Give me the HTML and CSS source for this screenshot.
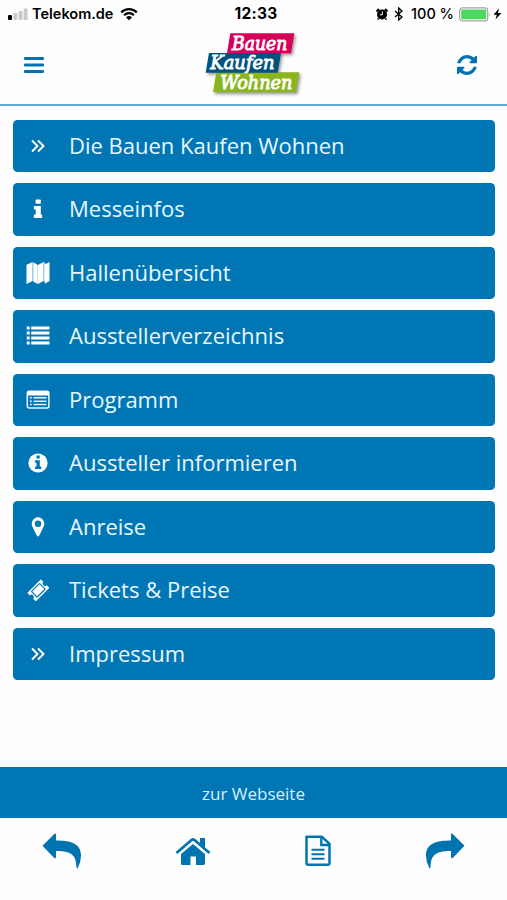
FILE: index.html
```html
<!DOCTYPE html>
<html lang="de">
<head>
<meta charset="utf-8">
<title>Bauen Kaufen Wohnen</title>
<link rel="stylesheet" href="styles.css">
</head>
<body>
<div class="status">
  <div class="status-left">
    <svg width="20" height="14" viewBox="0 0 20 14"><rect x="0" y="8" width="4" height="5" rx="1"/><g fill="#c9c9c9"><rect x="5.3" y="6" width="4" height="7" rx="1"/><rect x="10.5" y="4" width="4" height="9" rx="1"/><rect x="15.6" y="1.500" width="4" height="11.500" rx="1"/></g></svg>
    <span class="carrier">Telekom.de</span>
    <svg width="18" height="14" viewBox="0 0 18 14"><g fill="none" stroke="#000" stroke-width="2.200"><path d="M1.200 5.400a11 11 0 0 1 15.600 0M4.100 8.200a7 7 0 0 1 9.800 0"/></g><path d="M6 10.400a4.300 4.300 0 0 1 6 0L9 13.300z"/></svg>
  </div>
  <span class="time">12:33</span>
  <div class="status-right">
    <svg width="14" height="14" viewBox="0 0 14 14"><circle cx="7" cy="7.500" r="5"/><path d="M1.500 4.500 4 2M12.500 4.500 10 2M3.500 11.500l-.7 1M10.500 11.500l.7 1" stroke="#000" stroke-width="2"/><path d="M7.300 4.500v3.300H4.800" fill="none" stroke="#fff" stroke-width="1"/></svg>
    <svg class="bluetooth" width="10" height="14" viewBox="0 0 10 14"><path d="M1 4l7 6-3.300 3V1L8 4 1 10" fill="none" stroke="#000" stroke-width="1.300"/></svg>
    <span class="percent">100 %</span>
    <svg width="32" height="15" viewBox="0 0 32 15"><rect x=".7" y=".9" width="28" height="13" rx="3" fill="#fff" stroke="#a5a5a5" stroke-width="1.200"/><rect x="2.200" y="2.500" width="25" height="9.800" rx="1.200" fill="#4cd95f"/><path d="M30 5.500q1.500 2 0 4z" fill="#a5a5a5"/></svg>
    <svg class="bolt" width="9" height="12" viewBox="0 0 9 12"><path d="M6 .5.5 6.700h3.300L2.500 11.500 8.500 5H5z"/></svg>
  </div>
</div>
<header class="header">
  <svg width="20" height="18" viewBox="0 0 20 18"><path d="M1.200 2.500h17.600M1.200 9h17.600M1.200 15.500h17.600" stroke="#0074b1" stroke-width="3" stroke-linecap="round"/></svg>
  <svg class="logo" width="106" height="74" viewBox="30 84 318 222">
    <g class="logo-shadow"><path fill="#d6005a" d="M121 100H313L303 160H111z"/><path fill="#8ab51d" d="M79 217H328L318 277H69z"/><path fill="#00527f" d="M57 159H273L263 218H47z"/></g>
    <g class="logo-text"><text x="126" y="151" textLength="166" lengthAdjust="spacingAndGlyphs">Bauen</text><text x="61" y="208" textLength="193" lengthAdjust="spacingAndGlyphs">Kaufen</text><text x="91" y="267" textLength="216" lengthAdjust="spacingAndGlyphs">Wohnen</text></g>
  </svg>
  <svg width="20" height="20" viewBox="0 0 1536 1536" fill="#0074b1"><path d="M1511 928q0 5-1 7-64 268-268 434.500T764 1536q-146 0-282.500-55T238 1324l-129 129q-19 19-45 19t-45-19-19-45V960q0-26 19-45t45-19h448q26 0 45 19t19 45-19 45l-137 137q71 66 161 102t187 36q134 0 250-65t186-179q11-17 53-117 8-23 30-23h192q13 0 22.500 9.500t9.500 22.500zM1536 128v448q0 26-19 45t-45 19h-448q-26 0-45-19t-19-45 19-45l138-138Q969 256 768 256q-134 0-250 65T332 500q-11 17-53 117-8 23-30 23H50q-13 0-22.500-9.500T18 608v-7q65-268 270-434.500T768 0q146 0 284 55.500T1297 212l130-129q19-19 45-19t45 19 19 45z"/></svg>
</header>
<main class="menu">
  <a class="item"><svg class="icon" viewBox="0 0 30 30"><path d="M9 9.500l5.500 5.500L9 20.500M15 9.500l5.500 5.500-5.500 5.500" fill="none" stroke="#fff" stroke-width="1.900"/></svg><span class="label">Die Bauen Kaufen Wohnen</span></a>
  <a class="item"><svg class="icon" viewBox="0 0 30 30"><rect x="12.600" y="5.500" width="5.200" height="4.200" rx=".8"/><path d="M11.500 12H17.800v8.500h.7q.7 0 .7.700v2q0 .7-.7.700h-7q-.7 0-.7-.7v-2q0-.7.7-.7h1.200v-5h-1.200q-.7 0-.7-.7v-2q0-.8.700-.8z"/></svg><span class="label">Messeinfos</span></a>
  <a class="item"><svg class="icon" viewBox="0 0 30 30"><path d="M3.500 6.700 9.500 4v19l-6 3zM15 7l5.500-3v19L15 26z"/><path d="M9.500 4l5.500 3v19l-5.500-3zM20.500 4l1.700 1v19l-1.700-1z" fill="#c6e2f3"/><path d="M11 4.800l3 1.600v19l-3-1.600zM21.800 6.500 26.500 4v19l-4.700 2.700z"/></svg><span class="label">Hallenübersicht</span></a>
  <a class="item"><svg class="icon" viewBox="0 0 30 30"><path d="M3.700 5.500h3v3h-3zM8.200 5.500h18.300v3H8.200zM3.700 10.500h3v3h-3zM8.200 10.500h18.300v3H8.200zM3.700 15.500h3v3h-3zM8.200 15.500h18.300v3H8.200zM3.700 20.500h3v3h-3zM8.200 20.500h18.300v3H8.200z"/></svg><span class="label">Ausstellerverzeichnis</span></a>
  <a class="item"><svg class="icon" viewBox="0 0 30 30"><rect x="4.300" y="6.300" width="21.600" height="16.800" rx="2" fill="none" stroke="#e9f6ff" stroke-width="1.500"/><path d="M4 10.500V8q0-2 2-2h18q2 0 2 2v2.500z"/><path d="M6.800 12.800h2M10.500 12.800h13M6.800 16.200h2M10.500 16.200h13M6.800 19.600h2M10.500 19.600h13" stroke="#e2f3ff" stroke-width="1.500"/></svg><span class="label">Programm</span></a>
  <a class="item"><svg class="icon" viewBox="0 0 30 30"><circle cx="15" cy="15" r="9.600"/><path d="M13.500 7.500h3.200v3h-3.200zM12 12.300h4.800v6.200h1.500V21H12v-2.500h1.500v-3.700H12z" fill="#0076b5"/></svg><span class="label">Aussteller informieren</span></a>
  <a class="item"><svg class="icon" viewBox="0 0 30 30"><path fill-rule="evenodd" d="M15 5.300a6.300 6.300 0 0 1 6.300 6.300c0 1.500-.4 2.500-1 3.700l-4 8.200q-1.300 2-2.600 0l-4-8.200c-.6-1.200-1-2.200-1-3.700A6.300 6.300 0 0 1 15 5.300zm0 3.200a3.200 3.200 0 1 0 0 6.400 3.200 3.200 0 0 0 0-6.400z"/></svg><span class="label">Anreise</span></a>
  <a class="item"><svg class="icon" viewBox="0 0 30 30"><g transform="rotate(-45 15.300 15.300)"><path d="M6.300 9.300h18q.6 0 .6.600v3a2.400 2.400 0 0 0 0 4.800v3q0 .6-.6.600h-18q-.6 0-.6-.6v-3a2.400 2.400 0 0 0 0-4.800v-3q0-.6.600-.6z"/><rect x="9.600" y="11.300" width="11.400" height="8" rx=".6" fill="none" stroke="#0076b5" stroke-width="1.200"/></g></svg><span class="label">Tickets &amp; Preise</span></a>
  <a class="item"><svg class="icon" viewBox="0 0 30 30"><path d="M9 9.500l5.500 5.500L9 20.500M15 9.500l5.500 5.500-5.500 5.500" fill="none" stroke="#fff" stroke-width="1.900"/></svg><span class="label">Impressum</span></a>
</main>
<a class="website">zur Webseite</a>
<nav class="tabs">
  <svg width="40" height="36" viewBox="0 0 40 36"><path d="M.5 12.700 12 1.200q2-1.500 2 .7v5.700c15 0 25 3 25 15q0 6-3 12-1 2-1.500-.4C34 23 31 18 14 18v6q0 2-2 .7z"/></svg>
  <svg class="home" width="36" height="30" viewBox="0 0 36 30"><path d="M6 17 18 7l12 10v9.500q0 1.500-1.500 1.500H21v-8.500h-5.500V28h-8Q6 28 6 26.500z"/><path d="M1.500 16 16.500 3q1.500-1.200 3 0L34.500 16" fill="none" stroke="#0074b1" stroke-width="2.800"/><path d="M25 1h5v11l-5-4.300z"/></svg>
  <svg class="document" width="28" height="32" viewBox="0 0 28 32"><g fill="none" stroke="#0074b1"><path d="M2.500 1.800h15.500l7.500 7V28.500q0 1.200-1.200 1.200H3.700q-1.200 0-1.200-1.200V1.800z" stroke-width="2.500" stroke-linejoin="round"/><path d="M17.300 2v8h8" stroke-width="2.300"/><path d="M7.500 14.800h13M7.500 19.300h13M7.500 23.700h13" stroke-width="2"/></g></svg>
  <svg width="40" height="36" viewBox="0 0 40 36"><path transform="matrix(-1 0 0 1 40 0)" d="M.5 12.700 12 1.200q2-1.500 2 .7v5.700c15 0 25 3 25 15q0 6-3 12-1 2-1.500-.4C34 23 31 18 14 18v6q0 2-2 .7z"/></svg>
</nav>
</body>
</html>
```
FILE: styles.css
```css
* { box-sizing: border-box; }
body {
  margin: 0;
  width: 507px;
  height: 900px;
  overflow: hidden;
  display: flex;
  flex-direction: column;
  background: #fefefe;
  font-family: "Open Sans", sans-serif;
}
svg { display: block; flex: none; }
.status {
  height: 28px;
  padding: 0 5px 0 8px;
  display: grid;
  grid-template-columns: 1fr auto 1fr;
  align-items: center;
  font: 600 14.5px/28px Inter, sans-serif;
  color: #000;
}
.status-left, .status-right { display: flex; align-items: center; }
.status-left { gap: 4px; }
.carrier { width: 84px; white-space: nowrap; }
.status-right { justify-content: flex-end; }
.time { margin-left: 2px; font-size: 15.500px; font-weight: 700; letter-spacing: .3px; }
.bluetooth { margin: 0 7px 0 5px; }
.percent { width: 48px; font-weight: 500; white-space: nowrap; }
.bolt { margin-left: 2px; }
.header {
  height: 78px;
  padding: 0 30px 3px 24px;
  display: flex;
  align-items: center;
  justify-content: space-between;
  border-bottom: 2px solid #67a8d3;
}
.logo { margin-left: 4px; }
.logo-shadow { filter: drop-shadow(5px 6px 4px rgba(0, 0, 0, .4)); }
.logo-text {
  font: italic 400 54px "DejaVu Serif Condensed", "DejaVu Serif", serif;
  fill: #fff;
  stroke: #fff;
  stroke-width: 2.500px;
}
.menu {
  height: 661px;
  padding: 13.500px 12.500px 0 13px;
  display: flex;
  flex-direction: column;
  gap: 11px;
}
.item {
  height: 52.500px;
  flex: none;
  padding-left: 10px;
  display: flex;
  align-items: center;
  gap: 16px;
  border-radius: 4.500px;
  background: #0076b5;
  color: #e9f6ff;
  font-size: 22px;
  line-height: 30px;
  white-space: nowrap;
}
.icon { width: 30px; height: 30px; fill: #fff; }
.label { margin-bottom: 2px; }
.website {
  height: 51px;
  background: #0076b5;
  color: #d9effc;
  font-size: 17px;
  line-height: 53px;
  text-align: center;
}
.tabs {
  height: 82px;
  padding: 15px 41.500px 0;
  display: flex;
  align-items: flex-start;
  justify-content: space-between;
  fill: #0074b1;
}
.home { margin-top: 4px; }
.document { margin-top: 2px; }
```
